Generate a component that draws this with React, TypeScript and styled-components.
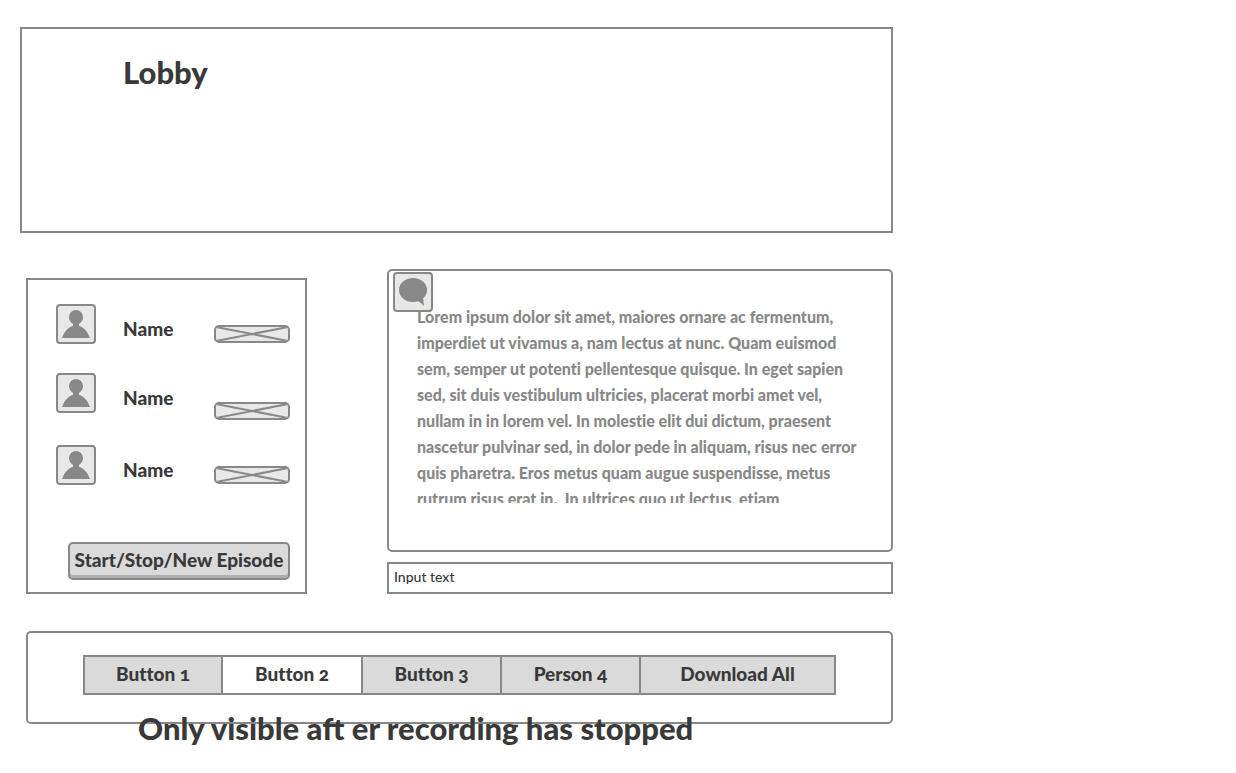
import React from "react";
import styled, { createGlobalStyle } from "styled-components";

const line = "#888888";
const ink = "#393939";
const fill = "#dadada";
const pale = "#e8e8e8";

const GlobalStyle = createGlobalStyle`
  *, *::before, *::after { box-sizing: border-box; }
  body {
    margin: 0;
    background: #ffffff;
    color: ${ink};
    font-family: Lato, "Open Sans", sans-serif;
  }
`;

const Page = styled.main`
  max-width: 893px;
  padding: 27px 0 48px 20px;
`;

const Header = styled.header`
  min-height: 206px;
  padding: 22px 101px;
  border: 2px solid ${line};
`;

const Title = styled.h1`
  margin: 0;
  font-size: 31px;
  line-height: 42px;
  font-weight: 900;
`;

const Columns = styled.div`
  display: grid;
  grid-template-columns: minmax(0, 281fr) minmax(0, 506fr);
  column-gap: 80px;
  align-items: end;
  margin: 36px 0 0 6px;
`;

const People = styled.section`
  display: flex;
  flex-direction: column;
  justify-content: space-between;
  min-height: 316px;
  padding: 24px 15px 12px 28px;
  border: 2px solid ${line};
`;

const PeopleList = styled.ul`
  display: grid;
  row-gap: 25px;
  margin: 0;
  padding: 0;
  list-style: none;
`;

const Person = styled.li`
  display: grid;
  grid-template-columns: 40px 1fr 76px;
  column-gap: 27px;
  align-items: start;
  min-height: 44px;
`;

const IconBox = styled.span`
  display: block;
  width: 40px;
  height: 40px;
  border: 2px solid ${line};
  border-radius: 4px;
  background: ${pale};

  svg { display: block; }
`;

const Name = styled.span`
  padding-top: 13px;
  font-size: 19px;
  line-height: 24px;
  font-weight: 900;
`;

const Placeholder = styled.span<{ $drop: number }>`
  display: block;
  height: 18px;
  margin-top: ${(p) => p.$drop}px;
  border: 2px solid ${line};
  border-radius: 5px;
  background: ${pale};
  overflow: hidden;

  svg { display: block; }
`;

const EpisodeButton = styled.button`
  align-self: flex-end;
  width: 222px;
  height: 38px;
  padding: 0 0 2px;
  border: 2px solid ${line};
  border-radius: 5px;
  background: ${fill};
  box-shadow: inset 0 -3px 0 #afafaf;
  color: ${ink};
  font: 900 19px/24px Lato, "Open Sans", sans-serif;
  white-space: nowrap;
`;

const Chat = styled.section`
  display: grid;
  grid-template-columns: minmax(0, 1fr);
  row-gap: 10px;
`;

const Messages = styled.div`
  position: relative;
  min-height: 283px;
  padding: 33px 20px 0 28px;
  border: 2px solid ${line};
  border-radius: 5px;
`;

const ChatBadge = styled(IconBox)`
  position: absolute;
  top: 1px;
  left: 4px;
`;

const MessageText = styled.p`
  height: 199px;
  margin: 0;
  overflow: hidden;
  color: ${line};
  font-size: 16px;
  line-height: 26px;
  font-weight: 900;
  font-variant-ligatures: none;
  white-space: pre;
`;

const TextInput = styled.input`
  width: 100%;
  height: 32px;
  padding: 0 5px 3px;
  border: 2px solid ${line};
  border-radius: 0;
  background: #ffffff;
  color: ${ink};
  font: 500 14px/20px Lato, "Open Sans", sans-serif;
`;

const Downloads = styled.section`
  position: relative;
  min-height: 93px;
  margin: 37px 0 0 6px;
  padding: 22px 55px;
  border: 2px solid ${line};
  border-radius: 5px;
`;

const Segments = styled.div`
  display: grid;
  grid-template-columns: 136fr 138fr 137fr 137fr 193fr;
  column-gap: 2px;
  border: 2px solid ${line};
  background: ${line};
`;

const Segment = styled.button<{ $selected?: boolean }>`
  height: 36px;
  padding: 0 0 2px;
  border: 0;
  background: ${(p) => (p.$selected ? "#ffffff" : fill)};
  color: ${ink};
  font: 900 19px/24px Lato, "Open Sans", sans-serif;
  font-variant-ligatures: none;
  font-variant-numeric: oldstyle-nums;
  white-space: nowrap;
`;

const Note = styled.p`
  position: absolute;
  top: 74px;
  left: 110px;
  margin: 0;
  font-size: 31px;
  line-height: 42px;
  font-weight: 900;
  white-space: nowrap;
`;

const PersonIcon = () => (
  <svg width="36" height="36" viewBox="0 0 36 36" fill={line} aria-hidden="true">
    <path d="M18 4a7 7 0 0 1 7 7c0 3-1.400 5.200-4 7v1.800C26 21.500 29.500 25.500 32 32H4C6.500 25.500 10 21.500 15 19.800v-1.800C12.400 16.200 11 14 11 11a7 7 0 0 1 7-7z" />
  </svg>
);

const BubbleIcon = () => (
  <svg width="36" height="36" viewBox="0 0 36 36" fill={line} aria-hidden="true">
    <ellipse cx="18" cy="16" rx="14" ry="12" />
    <path d="M22 26.500C25 28 27 30 29 32L28 24z" />
  </svg>
);

const CrossIcon = () => (
  <svg width="72" height="14" viewBox="0 0 72 14" stroke={line} strokeWidth="2" aria-hidden="true">
    <path d="M0 0L72 14M72 0L0 14" />
  </svg>
);

const people = [
  { id: 1, drop: 21 },
  { id: 2, drop: 29 },
  { id: 3, drop: 21 },
];

const segments = ["Button 1", "Button 2", "Button 3", "Person 4", "Download All"];

const message = `Lorem ipsum dolor sit amet, maiores ornare ac fermentum,
imperdiet ut vivamus a, nam lectus at nunc. Quam euismod
sem, semper ut potenti pellentesque quisque. In eget sapien
sed, sit duis vestibulum ultricies, placerat morbi amet vel,
nullam in in lorem vel. In molestie elit dui dictum, praesent
nascetur pulvinar sed, in dolor pede in aliquam, risus nec error
quis pharetra. Eros metus quam augue suspendisse, metus
rutrum risus erat in.  In ultrices quo ut lectus, etiam`;

export default function App() {
  return (
    <>
      <GlobalStyle />
      <Page>
        <Header>
          <Title>Lobby</Title>
        </Header>
        <Columns>
          <People>
            <PeopleList>
              {people.map((p) => (
                <Person key={p.id}>
                  <IconBox><PersonIcon /></IconBox>
                  <Name>Name</Name>
                  <Placeholder $drop={p.drop}><CrossIcon /></Placeholder>
                </Person>
              ))}
            </PeopleList>
            <EpisodeButton type="button">Start/Stop/New Episode</EpisodeButton>
          </People>
          <Chat>
            <Messages>
              <MessageText>{message}</MessageText>
              <ChatBadge><BubbleIcon /></ChatBadge>
            </Messages>
            <TextInput type="text" aria-label="Message" defaultValue="Input text" />
          </Chat>
        </Columns>
        <Downloads>
          <Segments>
            {segments.map((label) => (
              <Segment key={label} type="button" $selected={label === "Button 2"}>
                {label}
              </Segment>
            ))}
          </Segments>
          <Note>Only visible aft er recording has stopped</Note>
        </Downloads>
      </Page>
    </>
  );
}
